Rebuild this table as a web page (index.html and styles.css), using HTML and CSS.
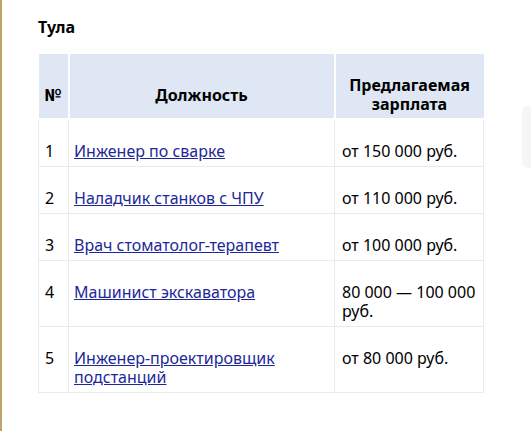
FILE: index.html
```html
<!DOCTYPE html>
<html lang="ru">
<head>
<meta charset="utf-8">
<link rel="stylesheet" href="styles.css">
</head>
<body>
<div class="page">
  <h3 class="city">Тула</h3>
  <table class="jobs">
    <colgroup>
      <col class="c-num">
      <col class="c-pos">
      <col class="c-pay">
    </colgroup>
    <thead>
      <tr>
        <th class="num-head">№</th>
        <th>Должность</th>
        <th>Предлагаемая зарплата</th>
      </tr>
    </thead>
    <tbody>
      <tr><td>1</td><td><a href="#">Инженер по сварке</a></td><td>от 150 000 руб.</td></tr>
      <tr><td>2</td><td><a href="#">Наладчик станков с ЧПУ</a></td><td>от 110 000 руб.</td></tr>
      <tr><td>3</td><td><a href="#">Врач стоматолог-терапевт</a></td><td>от 100 000 руб.</td></tr>
      <tr><td>4</td><td><a href="#">Машинист экскаватора</a></td><td>80 000 — 100 000 руб.</td></tr>
      <tr><td>5</td><td><a href="#">Инженер-проектировщик подстанций</a></td><td>от 80 000 руб.</td></tr>
    </tbody>
  </table>
  <div class="side-widget"></div>
</div>
</body>
</html>
```

FILE: styles.css
```css
html, body {
  margin: 0;
  padding: 0;
  background: #fff;
}
body {
  font-family: "Noto Sans", "Liberation Sans", Arial, sans-serif;
  color: #000;
}
.page {
  position: relative;
  min-height: 431px;
  box-sizing: border-box;
  border-left: 2px solid #bfa56c;
  padding: 18px 0 0 36px;
  overflow: hidden;
}
.city {
  margin: 0 0 18px;
  font-size: 16px;
  font-weight: 700;
  line-height: 18px;
}
.jobs {
  border-collapse: collapse;
  width: 445px;
  table-layout: fixed;
  font-size: 16px;
  line-height: 19px;
}
.c-num { width: 30px; }
.c-pos { width: 266px; }
.c-pay { width: 149px; }
.jobs th {
  background: #dee7f3;
  border: 2px solid #fff;
  border-top: 0;
  font-weight: 700;
  text-align: center;
  vertical-align: middle;
  padding: 22px 7px 4px;
}
.jobs th:first-child { border-left: 0; text-align: left; padding-left: 6px; }
.jobs th:last-child { border-right: 0; }
.jobs th.num-head {
  font-family: Roboto, "Noto Sans", sans-serif;
  font-size: 17px;
}
.jobs td {
  border: 1px solid #e6ebf1;
  vertical-align: top;
  padding: 22px 7px 5px;
}
.jobs td:first-child { padding-left: 6px; }
.jobs td:nth-child(2) { padding-left: 5px; }
.jobs td a {
  color: #1d2899;
  text-decoration: underline;
}
.side-widget {
  position: absolute;
  left: 520px;
  top: 105px;
  width: 40px;
  height: 63px;
  border-radius: 7px;
  background: #f6f6f6;
}
```
